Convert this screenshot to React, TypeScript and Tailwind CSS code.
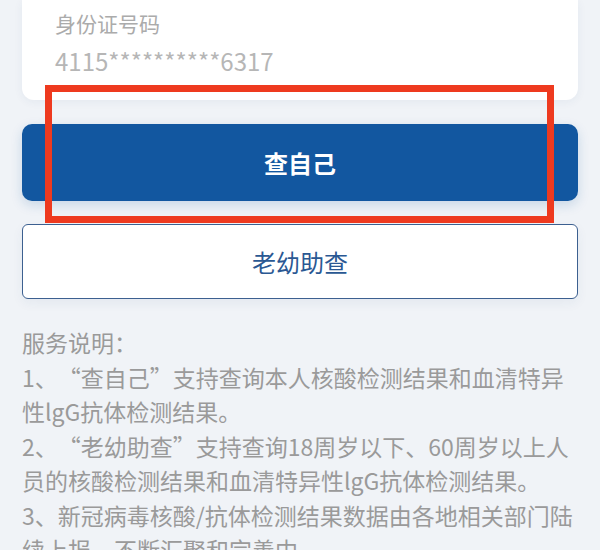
import React from 'react';

const cjk = "font-['Noto_Sans_CJK_SC','Noto_Sans',sans-serif]";

const notes = [
  '服务说明：',
  '1、“查自己”支持查询本人核酸检测结果和血清特异性lgG抗体检测结果。',
  '2、“老幼助查”支持查询18周岁以下、60周岁以上人员的核酸检测结果和血清特异性lgG抗体检测结果。',
  '3、新冠病毒核酸/抗体检测结果数据由各地相关部门陆续上报，不断汇聚和完善中。',
];

const App: React.FC = () => {
  return (
    <div lang="zh-CN" className={`relative w-[600px] h-[550px] overflow-hidden bg-[#f0f3f7] px-[22px] ${cjk}`}>
      {/* 身份证卡片（上半部分被截掉） */}
      <div className="h-[100px] bg-white rounded-b-[12px] shadow-[0_2px_10px_rgba(40,70,120,0.06)] pl-[33px] pt-[8px]">
        <div className="text-[21px] leading-[30px] text-[#ababab]">身份证号码</div>
        <div className="mt-[6px] text-[24px] leading-[34px] text-[#b6b6b6]">4115**********6317</div>
      </div>

      <button
        type="button"
        className="mt-[24px] w-full h-[77px] rounded-[10px] bg-[#1257a0] text-white text-[24px] font-bold shadow-[0_4px_12px_rgba(18,87,160,0.18)]"
      >
        查自己
      </button>

      <button
        type="button"
        className="mt-[23px] w-full h-[75px] rounded-[6px] bg-white border-[1.5px] border-[#3c6090] text-[#2a5893] text-[24px] font-normal shadow-[0_4px_12px_rgba(40,70,120,0.06)]"
      >
        老幼助查
      </button>

      <div className="mt-[26px] text-[23px] leading-[34.5px] text-[#9a9a9a] [text-spacing-trim:space-all]">
        {notes.map((line) => (
          <p key={line}>{line}</p>
        ))}
      </div>

      {/* 红色标注框 */}
      <div className="absolute left-[45px] top-[85px] w-[509px] h-[138px] border-[7px] border-[#ee3a1f] pointer-events-none" />
    </div>
  );
};

export default App;
